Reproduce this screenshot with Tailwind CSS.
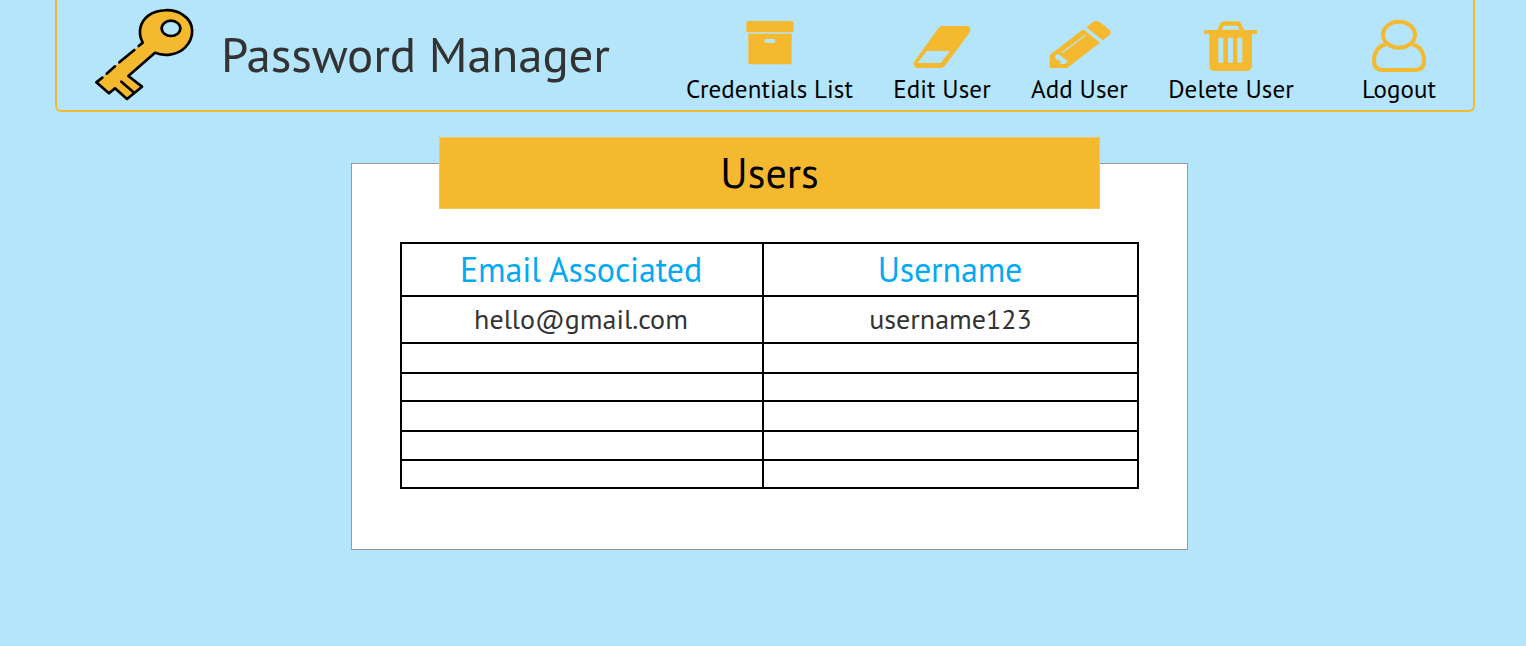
<!DOCTYPE html>
<html lang="en">
<head>
<meta charset="utf-8">
<title>Password Manager</title>
<script src="https://cdn.jsdelivr.net/npm/@tailwindcss/browser@4"></script>
</head>
<body class="h-screen overflow-hidden bg-[#b4e5fb] font-['PT_Sans',Lato,sans-serif] text-black">
  <header class="ml-[55px] flex h-28 w-[1420px] rounded-b-md border-2 border-t-0 border-[#f5b92f]">
    <svg class="ml-[37px] mt-[7px] h-[94px] w-[102px] shrink-0" viewBox="132 21 306 282" fill="none" stroke="#000" stroke-width="8" stroke-linejoin="round" stroke-linecap="round">
      <path d="M278 128C262 98 270 66 295 47C322 26 372 25 399 45C432 67 435 112 405 143C385 163 345 172 315 158L235 228L276 260L231 297L195 265L177 280L139 247Z" fill="#f5b92f" stroke="none"/>
      <path d="M157 233L139 247L177 280L195 265L231 297L276 260L235 228L315 158C345 172 385 163 405 143C435 112 434 67 399 45C372 25 322 26 295 47C270 66 262 98 278 128L266 138M253 150L208 187M195 199L170 221M214 245L249 275"/>
      <ellipse cx="363" cy="85" rx="28" ry="23" fill="#b4e5fb"/>
    </svg>
    <h1 class="ml-[25px] mt-[24px] w-[400px] shrink-0 whitespace-nowrap text-[49px] leading-[60px] tracking-[-0.14px] text-[#333]">Password Manager</h1>
    <nav class="ml-[63px] flex text-[25px] leading-[30px] tracking-[0.09px] whitespace-nowrap">
      <a class="flex w-[171px] flex-col items-center">
        <svg class="h-[74px] w-[60px]" viewBox="177 -30 180 222" fill="#f5b92f">
          <rect x="196" y="33" width="142" height="34" rx="5"/>
          <path fill-rule="evenodd" d="M202 71H332V159Q332 163 328 163H206Q202 163 202 159ZM256 87A6 6 0 0 0 256 99H277A6 6 0 0 0 277 87Z"/>
        </svg>
        <span>Credentials List</span>
      </a>
      <a class="ml-[37px] flex w-[100px] flex-col items-center">
        <svg class="h-[74px] w-[60px]" viewBox="696 -30 180 222" fill="#f5b92f">
          <path fill-rule="evenodd" d="M786 48H861Q874 50 870 66L797 165Q790 174 780 174H712Q698 171 702 156L774 56Q779 49 786 48ZM741 123L712 159H782L810 123Z"/>
        </svg>
        <span>Edit User</span>
      </a>
      <a class="ml-[37.5px] flex w-[100px] flex-col items-center">
        <svg class="h-[74px] w-[64px]" viewBox="82 -30 192 222" fill="#f5b92f">
          <path fill-rule="evenodd" d="M188 58L238 98L139 174H87V135ZM102 137L113 132L141 154L133 162H120L118 151L106 149Z"/>
          <path d="M126 127L192 77" stroke="#b4e5fb" stroke-width="3.5" stroke-linecap="round"/>
          <path d="M197 52L216 37Q226 29 237 36L267 60Q274 67 267 75L246 91Z"/>
        </svg>
        <span>Add User</span>
      </a>
      <a class="ml-[37.5px] flex w-[128px] flex-col items-center">
        <svg class="h-[74px] w-[60px]" viewBox="545 -30 180 222" fill="#f5b92f">
          <path fill-rule="evenodd" d="M555 60H594L603 40Q607 34 615 34H654Q661 34 665 40L674 60H713V72H698V168Q696 182 684 183H584Q571 182 570 168V72H555ZM607 59H661L655 47H613ZM600 83Q597 83 597 86V155Q597 158 600 158H609Q612 158 612 155V86Q612 83 609 83ZM629 83Q626 83 626 86V155Q626 158 629 158H638Q641 158 641 155V86Q641 83 638 83ZM657 83Q654 83 654 86V155Q654 158 657 158H666Q669 158 669 155V86Q669 83 666 83Z"/>
        </svg>
        <span>Delete User</span>
      </a>
      <a class="ml-[64px] flex w-[80px] flex-col items-center">
        <svg class="h-[74px] w-[60px]" viewBox="87 0 180 222" fill="none" stroke="#f5b92f" stroke-width="12">
          <ellipse cx="177" cy="104" rx="48" ry="39"/>
          <path d="M137 134C112 137 102 160 102 183Q102 210 130 210H224Q252 210 252 183C252 160 242 137 217 134"/>
        </svg>
        <span>Logout</span>
      </a>
    </nav>
  </header>

  <main class="ml-[351px] mt-[51px] flex h-[387px] w-[837px] flex-col items-center border border-[#999] bg-white">
    <h2 class="-mt-[27px] h-[72px] w-[661px] shrink-0 border border-[#f6c655] bg-[#f5b92f] text-center text-[42px] leading-[69px]"><span>Users</span></h2>
    <table class="mt-[33px] w-[739px] table-fixed border-collapse text-center [&_td]:border-2 [&_td]:border-black [&_td]:p-0 [&_th]:border-2 [&_th]:border-black [&_th]:p-0">
      <colgroup><col class="w-[362px]"><col class="w-[375px]"></colgroup>
      <tr class="h-[53px] text-[34px] leading-[40px] tracking-[-0.15px] text-[#03a9f4]"><th class="font-normal"><span class="block -mt-[2px] pr-[2px]">Email Associated</span></th><th class="font-normal"><span class="block -mt-[2px] pr-px">Username</span></th></tr>
      <tr class="h-[47px] text-[28px] leading-[34px] text-[#333]"><td><span class="block -mt-[2px] pr-[2px]">hello@gmail.com</span></td><td><span class="block -mt-[2px]">username123</span></td></tr>
      <tr class="h-[30px]"><td></td><td></td></tr>
      <tr class="h-[28px]"><td></td><td></td></tr>
      <tr class="h-[30px]"><td></td><td></td></tr>
      <tr class="h-[29px]"><td></td><td></td></tr>
      <tr class="h-[28px]"><td></td><td></td></tr>
    </table>
  </main>
</body>
</html>
